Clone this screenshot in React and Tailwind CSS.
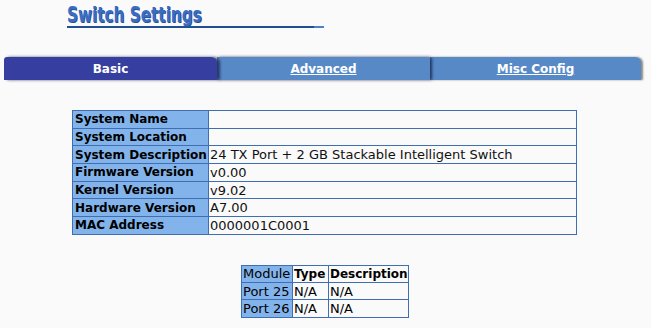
import React from "react";

const info = [
  ["System Name", ""],
  ["System Location", ""],
  ["System Description", "24 TX Port + 2 GB Stackable Intelligent Switch"],
  ["Firmware Version", "v0.00"],
  ["Kernel Version", "v9.02"],
  ["Hardware Version", "A7.00"],
  ["MAC Address", "0000001C0001"],
];

const ports = [
  ["Port 25", "N/A", "N/A"],
  ["Port 26", "N/A", "N/A"],
];

export default function App() {
  return (
    <div className="w-[651px] h-[328px] bg-[#fafafa] overflow-hidden text-black" style={{ fontFamily: '"DejaVu Sans", Verdana, sans-serif' }}>
      {/* Title */}
      <div className="pt-[3px] pl-[67px]">
        <div className="w-[257px] h-[23px] flex items-end">
          <span
            className="inline-block origin-left scale-x-[0.77] text-[22px] leading-[22px] font-bold text-[#3a6cc2] whitespace-nowrap"
            style={{ fontFamily: '"DejaVu Sans Condensed", "Liberation Sans Narrow", sans-serif', textShadow: "1px 1px 0 #2a4f95" }}
          >
            Switch Settings
          </span>
        </div>
        <div className="w-[257px] flex h-[2px]">
          <div className="flex-1 bg-[#1f4f92]"></div>
          <div className="w-[10px] bg-[#4f80c4]"></div>
        </div>
      </div>

      {/* Tabs */}
      <div className="mt-[29px] ml-[4px] flex h-[23px] w-[637px]">
        <div className="relative z-30 w-[213px] h-full bg-[#363fa0] rounded-tl-[3px] rounded-tr-[6px] flex items-center justify-center text-white font-bold text-[12px] shadow-[3px_0_3px_rgba(20,30,70,0.75)]">
          Basic
        </div>
        <div className="relative z-20 w-[213px] h-full bg-[#5889c7] rounded-tr-[3px] flex items-center justify-center text-white font-bold text-[12px] underline shadow-[2px_0_3px_rgba(20,30,70,0.8)]">
          Advanced
        </div>
        <div className="relative z-10 flex-1 h-full bg-[#5889c7] rounded-tr-[6px] flex items-center justify-center text-white font-bold text-[12px] underline shadow-[2px_0_2px_rgba(60,60,60,0.6)]">
          Misc Config
        </div>
      </div>

      {/* Main info table */}
      <div className="mt-[30px] ml-[72px] w-[505px] border border-b-0 border-[#3f6fb2]">
        {info.map(([k, v]) => (
          <div key={k} className="flex h-[17.7px] border-b border-[#3f6fb2]">
            <div className="w-[136px] shrink-0 bg-[#82b3ea] border-r border-[#3f6fb2] pl-[2px] flex items-center font-bold text-[12px] leading-none whitespace-nowrap">
              {k}
            </div>
            <div className="flex-1 pl-[1px] flex items-center text-[13px] leading-none whitespace-nowrap text-[#111]">
              {v}
            </div>
          </div>
        ))}
      </div>

      {/* Module table */}
      <div className="mt-[30px] ml-[241px] w-[168px] border border-b-0 border-[#3f6fb2] text-[13px]">
        <div className="flex h-[17.3px] border-b border-[#3f6fb2]">
          <div className="w-[51px] shrink-0 bg-[#82b3ea] border-r border-[#3f6fb2] pl-[1px] flex items-center leading-none">Module</div>
          <div className="w-[36px] shrink-0 border-r border-[#3f6fb2] pl-[1px] flex items-center leading-none font-bold text-[12px]">Type</div>
          <div className="flex-1 pl-[1px] flex items-center leading-none font-bold text-[12px]">Description</div>
        </div>
        {ports.map(([a, b, c]) => (
          <div key={a} className="flex h-[17.3px] border-b border-[#3f6fb2]">
            <div className="w-[51px] shrink-0 bg-[#82b3ea] border-r border-[#3f6fb2] pl-[1px] flex items-center leading-none whitespace-nowrap">{a}</div>
            <div className="w-[36px] shrink-0 border-r border-[#3f6fb2] pl-[1px] flex items-center leading-none">{b}</div>
            <div className="flex-1 pl-[1px] flex items-center leading-none">{c}</div>
          </div>
        ))}
      </div>
    </div>
  );
}
